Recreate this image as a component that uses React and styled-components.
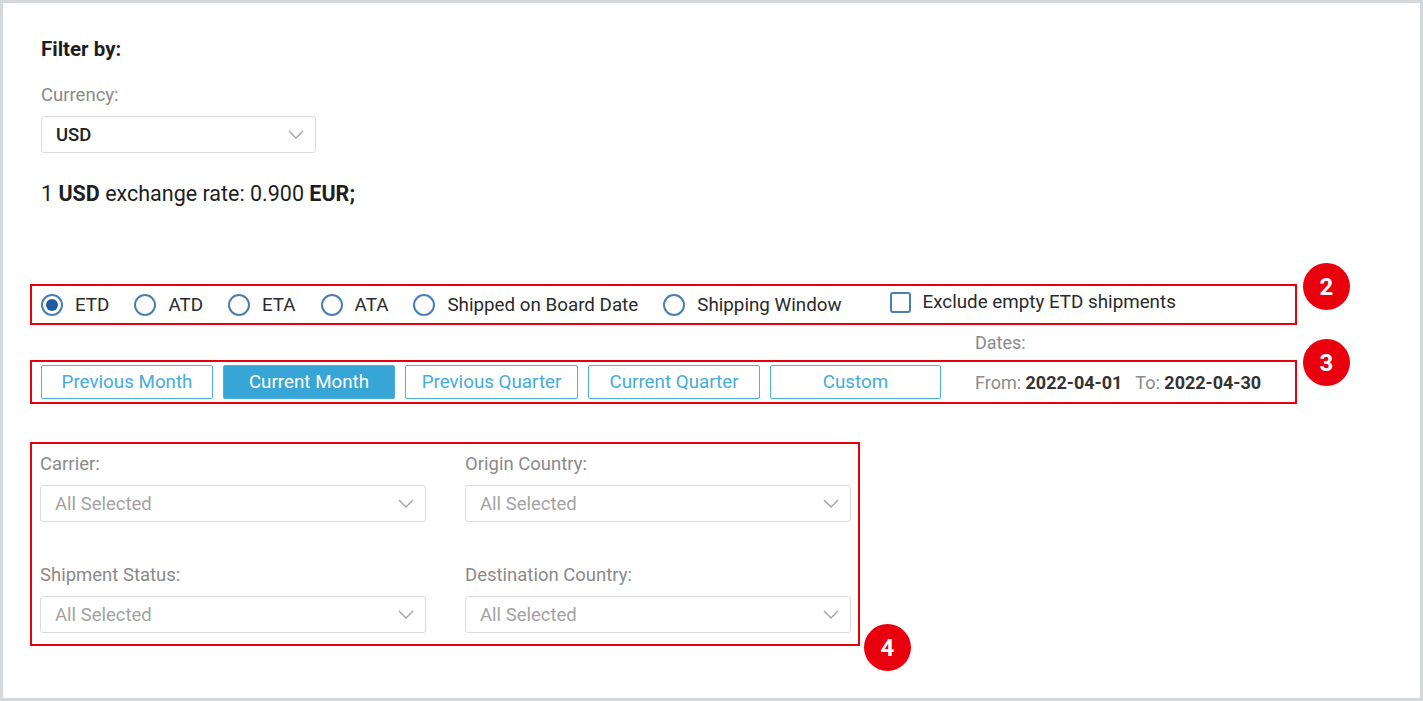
import styled, { createGlobalStyle } from 'styled-components';

const GlobalStyle = createGlobalStyle`
  html, body {
    margin: 0;
    padding: 0;
    background: #ffffff;
  }
  body {
    font-family: Roboto, 'Liberation Sans', sans-serif;
    color: #222;
  }
`;

const Frame = styled.div`
  box-sizing: border-box;
  width: 1423px;
  height: 701px;
  border: 3px solid #d5d8db;
  background: #fff;
  padding: 35px 0 0 27px;
`;

const Title = styled.div`
  margin-left: 11px;
  font-size: 20.5px;
  font-weight: 700;
  line-height: 22px;
  color: #1e1e1e;
`;

const Label = styled.div`
  font-size: 18.5px;
  line-height: 22px;
  color: #8a8a8a;
  margin-bottom: ${(p) => p.gap || 10}px;
`;

const Field = styled.div`
  margin-left: ${(p) => p.indent || 0}px;
  margin-top: ${(p) => p.top || 0}px;
  width: ${(p) => p.width}px;
`;

const SelectBox = styled.div`
  box-sizing: border-box;
  height: 37px;
  border: 1px solid #d9dcdf;
  border-radius: 3px;
  display: flex;
  align-items: center;
  justify-content: space-between;
  padding: 0 11px 0 14px;
  font-size: 18.5px;
  color: ${(p) => (p.muted ? '#a3a3a3' : '#222')};
  font-weight: ${(p) => (p.muted ? 400 : 500)};
`;

const Rate = styled.div`
  margin: 28px 0 0 11px;
  font-size: 21.5px;
  line-height: 26px;
  color: #1e1e1e;
  b {
    font-weight: 700;
  }
`;

const Annotated = styled.div`
  position: relative;
  box-sizing: border-box;
  width: ${(p) => p.width}px;
  margin-top: ${(p) => p.top}px;
  border: 2px solid #e8000c;
`;

const Badge = styled.div`
  position: absolute;
  left: ${(p) => p.left}px;
  top: ${(p) => p.y}px;
  width: 47px;
  height: 47px;
  border-radius: 50%;
  background: #e8000c;
  color: #fff;
  font-size: 24px;
  font-weight: 700;
  display: flex;
  align-items: center;
  justify-content: center;
`;

const RadioRow = styled.div`
  display: flex;
  align-items: center;
  height: 37px;
  padding-left: 9px;
`;

const Option = styled.label`
  display: flex;
  align-items: center;
  gap: 12px;
  margin-right: ${(p) => p.space || 26}px;
  font-size: 18.8px;
  color: #2a2a2a;
`;

const Radio = styled.span`
  box-sizing: border-box;
  width: 22px;
  height: 22px;
  border-radius: 50%;
  border: 2px solid #4a7fb5;
  display: flex;
  align-items: center;
  justify-content: center;
  &::after {
    content: '';
    width: 12px;
    height: 12px;
    border-radius: 50%;
    background: ${(p) => (p.checked ? '#1d5c9e' : 'transparent')};
  }
`;

const Checkbox = styled.span`
  box-sizing: border-box;
  width: 21px;
  height: 21px;
  border-radius: 3px;
  border: 2px solid #4a7fb5;
  margin-top: -5px;
`;

const CheckText = styled.span`
  margin-top: -5px;
`;

const DatesLabel = styled.div`
  margin: 8px 0 0 945px;
  font-size: 18px;
  line-height: 20px;
  color: #8a8a8a;
`;

const ButtonRow = styled.div`
  display: flex;
  align-items: center;
  height: 40px;
  padding-left: 9px;
`;

const PeriodButton = styled.button`
  box-sizing: border-box;
  width: ${(p) => p.width}px;
  height: 34px;
  margin-right: ${(p) => p.space || 10}px;
  border: 1.5px solid #4ab0dc;
  border-radius: 2px;
  background: ${(p) => (p.active ? '#37a5d5' : '#fff')};
  color: ${(p) => (p.active ? '#fff' : '#45acdc')};
  font-family: Roboto, 'Liberation Sans', sans-serif;
  font-size: 18.8px;
  padding: 0;
`;

const DateRange = styled.div`
  margin-left: 24px;
  font-size: 18px;
  color: #8a8a8a;
  b {
    font-weight: 700;
    color: #333;
    margin-right: 13px;
  }
`;

const FilterGrid = styled.div`
  display: grid;
  grid-template-columns: 386px 386px;
  column-gap: 39px;
  row-gap: 42px;
  padding: 9px 0 11px 8px;
`;

const Chevron = () => (
  <svg width="16" height="9" viewBox="0 0 16 9" fill="none">
    <path d="M1 1l7 7 7-7" stroke="#a0a0a0" strokeWidth="1.3" />
  </svg>
);

const Select = ({ value, muted }) => (
  <SelectBox muted={muted}>
    <span>{value}</span>
    <Chevron />
  </SelectBox>
);

const radios = [
  ['ETD', true],
  ['ATD'],
  ['ETA'],
  ['ATA'],
  ['Shipped on Board Date'],
  ['Shipping Window'],
];

const buttons = [
  ['Previous Month', 172],
  ['Current Month', 172, true],
  ['Previous Quarter', 173],
  ['Current Quarter', 172],
  ['Custom', 171],
];

const filters = ['Carrier:', 'Origin Country:', 'Shipment Status:', 'Destination Country:'];

const App = () => {
  return (
    <>
      <GlobalStyle />
      <Frame>
        <Title>Filter by:</Title>
        <Field indent={11} top={24} width={275}>
          <Label gap={10}>Currency:</Label>
          <Select value="USD" />
        </Field>
        <Rate>
          1 <b>USD</b> exchange rate: 0.900 <b>EUR;</b>
        </Rate>

        <Annotated width={1267} top={77}>
          <RadioRow>
            {radios.map(([name, checked], i) => (
              <Option key={name} space={i === radios.length - 1 ? 48 : 25}>
                <Radio checked={checked} />
                {name}
              </Option>
            ))}
            <Option>
              <Checkbox />
              <CheckText>Exclude empty ETD shipments</CheckText>
            </Option>
          </RadioRow>
          <Badge left={1271} y={-23}>2</Badge>
        </Annotated>

        <DatesLabel>Dates:</DatesLabel>

        <Annotated width={1267} top={7}>
          <ButtonRow>
            {buttons.map(([name, w, active]) => (
              <PeriodButton key={name} width={w} active={active}>
                {name}
              </PeriodButton>
            ))}
            <DateRange>
              From: <b>2022-04-01</b>To: <b>2022-04-30</b>
            </DateRange>
          </ButtonRow>
          <Badge left={1271} y={-23}>3</Badge>
        </Annotated>

        <Annotated width={830} top={38}>
          <FilterGrid>
            {filters.map((f) => (
              <Field key={f} width={386}>
                <Label gap={10}>{f}</Label>
                <Select value="All Selected" muted />
              </Field>
            ))}
          </FilterGrid>
          <Badge left={832} y={180}>4</Badge>
        </Annotated>
      </Frame>
    </>
  );
};

export default App;
